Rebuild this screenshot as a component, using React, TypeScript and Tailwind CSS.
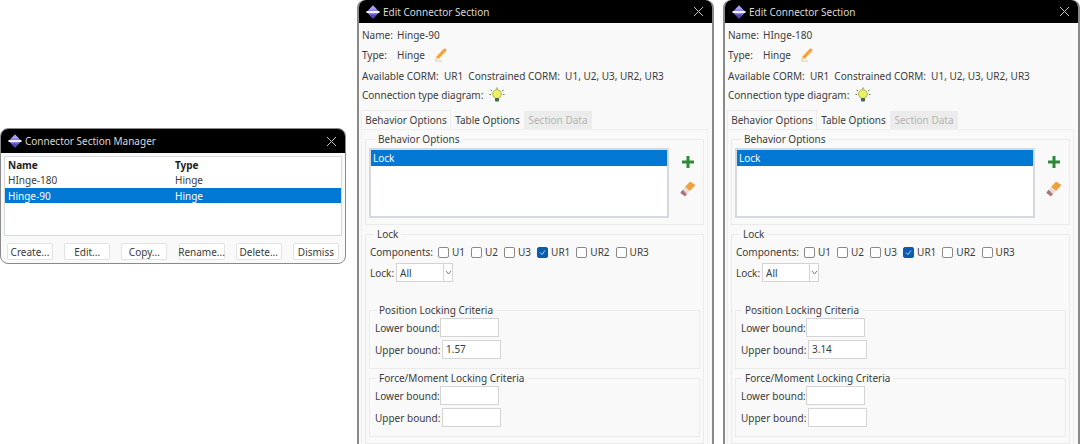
import React from "react";

const Logo = () => (
  <svg width="14" height="14" viewBox="0 0 14 14" className="shrink-0">
    <path d="M7 0.5 L13.5 7 L7 13.5 L0.5 7 Z" fill="#8d7fe0" />
    <path d="M7 0.5 L11 4.5 H3 Z" fill="#a99ff0" />
    <path d="M3 9.5 H11 L7 13.5 Z" fill="#4d47b8" />
    <rect x="0.5" y="6" width="13" height="2" fill="#f1f0ff" />
  </svg>
);

const CloseIcon = () => (
  <svg width="11" height="11" viewBox="0 0 11 11" className="shrink-0">
    <path d="M1 1 L10 10 M10 1 L1 10" stroke="#c4c4c4" strokeWidth="1" fill="none" />
  </svg>
);

const Pencil = () => (
  <svg width="13" height="14" viewBox="0 0 13 14">
    <path d="M9.5 1 L12 3.2 L4.5 11 L2 9 Z" fill="#f0a63c" />
    <path d="M9.5 1 L11 0.6 L12.5 2 L12 3.2 Z" fill="#e8855a" />
    <path d="M2 9 L4.5 11 L1 12.5 Z" fill="#f3d6a8" />
    <path d="M1 13 H8" stroke="#e9c9a0" strokeWidth="1" />
  </svg>
);

const Bulb = () => (
  <svg width="16" height="16" viewBox="0 0 16 16">
    <path d="M8 0.5 V2 M1.5 3 L3 4 M14.5 3 L13 4 M0.5 7.5 H2 M14 7.5 H15.5" stroke="#5f7f4a" strokeWidth="1" />
    <circle cx="8" cy="7" r="4.4" fill="#eef06a" stroke="#9aa83a" strokeWidth="0.8" />
    <rect x="6" y="11" width="4" height="3.5" rx="0.8" fill="#3f6b45" />
  </svg>
);

const Plus = () => (
  <svg width="14" height="14" viewBox="0 0 14 14">
    <path d="M5.5 1 H8.5 V5.5 H13 V8.5 H8.5 V13 H5.5 V8.5 H1 V5.5 H5.5 Z" fill="#2e8b35" />
  </svg>
);

const Eraser = () => (
  <svg width="18" height="18" viewBox="0 0 18 18">
    <path d="M11 1.5 L16.5 5 L11 11 L6 7 Z" fill="#eda23f" />
    <path d="M6 7 L11 11 L8 14 L3.5 10 Z" fill="#e9dcd0" />
    <path d="M3.5 10 L8 14 L6 16.5 L1.5 13 Z" fill="#c96a78" />
    <path d="M3.5 10 L6 12 L4 14.5 L1.5 13 Z" fill="#8a7f8a" />
  </svg>
);

const TitleBar = ({ title, tall }: { title: string; tall?: boolean }) => (
  <div className={`flex items-center bg-black text-[#d8d8d8] rounded-t-[7px] pl-[7px] pr-[8px] ${tall ? "h-[24px]" : "h-[23px]"}`}>
    <Logo />
    <span className="ml-[3px] text-[10px] leading-none">{title}</span>
    <span className="ml-auto flex">
      <CloseIcon />
    </span>
  </div>
);

const managerButtons = ["Create...", "Edit...", "Copy...", "Rename...", "Delete...", "Dismiss"];

const Manager = () => (
  <div className="w-[346px] h-[136px] mt-[128px] shrink-0 rounded-[8px] border border-[#8a8a8a] bg-[#f9f9f9]">
    <TitleBar title="Connector Section Manager" tall />
    <div className="mx-[3px] mt-[3px] h-[80px] border border-[#d5d9dd] bg-white">
      <div className="flex h-[15px] items-center font-bold text-[#222]">
        <span className="w-[167px] pl-[3px]">Name</span>
        <span className="pl-[3px]">Type</span>
      </div>
      <div className="flex h-[16px] items-center">
        <span className="w-[167px] pl-[3px]">HInge-180</span>
        <span className="pl-[3px]">Hinge</span>
      </div>
      <div className="flex h-[15px] items-center bg-[#0078d4] text-white">
        <span className="w-[167px] pl-[3px]">Hinge-90</span>
        <span className="pl-[3px]">Hinge</span>
      </div>
    </div>
    <div className="mx-[6px] mt-[7px] flex justify-between">
      {managerButtons.map((b) => (
        <div key={b} className="flex h-[17px] w-[46px] items-center justify-center rounded-[2px] border border-[#e2e2e2] bg-white whitespace-nowrap">
          {b}
        </div>
      ))}
    </div>
  </div>
);

const Check = ({ label, checked }: { label: string; checked?: boolean }) => (
  <div className="flex items-center gap-[3px]">
    <div className={`flex h-[11px] w-[11px] items-center justify-center rounded-[2px] border ${checked ? "border-[#0a5cb0] bg-[#0a5cb0]" : "border-[#8a8a8a] bg-white"}`}>
      {checked && (
        <svg width="7" height="7" viewBox="0 0 7 7">
          <path d="M1 3.5 L3 5.5 L6 1.5" stroke="#cfe3f7" fill="none" strokeWidth="0.9" />
        </svg>
      )}
    </div>
    <span>{label}</span>
  </div>
);

const Group = ({ title, className, legendClass, children }: { title: string; className: string; legendClass: string; children: React.ReactNode }) => (
  <fieldset className={`border border-[#ebebeb] ${className}`}>
    <legend className={`leading-[12px] px-[3px] ${legendClass}`}>{title}</legend>
    {children}
  </fieldset>
);

const Field = ({ className, value }: { className: string; value?: string }) => (
  <div className={`h-[19px] w-[59px] border border-[#d4d4d4] bg-white pl-[3px] leading-[17px] ${className}`}>{value}</div>
);

const Bounds = ({ upper }: { upper?: string }) => (
  <div className="pl-[5px]">
    <div className="flex items-center">
      <span className="w-[65px]">Lower bound:</span>
      <Field className="" />
    </div>
    <div className="mt-[3px] flex items-center">
      <span className="w-[67px]">Upper bound:</span>
      <Field className="" value={upper} />
    </div>
  </div>
);

const EditWindow = ({ name, upper, className }: { name: string; upper: string; className: string }) => (
  <div className={`w-[357px] h-[460px] shrink-0 rounded-t-[8px] border-x-2 border-[#8a8a8a] bg-[#f9f9f9] ${className}`}>
    <TitleBar title="Edit Connector Section" />
    <div className="pl-[3px]">
      <div className="flex h-[14px] mt-[5px] items-center">
        <span className="w-[35px]">Name:</span>
        <span>{name}</span>
      </div>
      <div className="flex h-[14px] mt-[6px] items-center">
        <span className="w-[35px]">Type:</span>
        <span>Hinge</span>
        <span className="ml-[9px] flex">
          <Pencil />
        </span>
      </div>
      <div className="flex h-[14px] mt-[7px] items-center">
        <span>Available CORM:&nbsp; UR1&nbsp; Constrained CORM:&nbsp; U1, U2, U3, UR2, UR3</span>
      </div>
      <div className="flex h-[14px] mt-[5px] items-center">
        <span>Connection type diagram:</span>
        <span className="ml-[6px] flex">
          <Bulb />
        </span>
      </div>
    </div>
    <div className="mt-[8px] ml-[2px] flex h-[19px] items-end">
      <div className="flex h-[19px] w-[90px] items-center justify-center border-x border-t border-[#ececec] bg-[#fafafa]">Behavior Options</div>
      <div className="flex h-[18px] w-[73px] items-center justify-center">Table Options</div>
      <div className="flex h-[18px] w-[68px] items-center justify-center bg-[#ececec] text-[#b4b4b4]">Section Data</div>
    </div>
    <div className="ml-[2px] mr-[4px] border border-[#efefef] px-[3px] pt-[3px]">
      <Group title="Behavior Options" className="h-[92px] pl-[3px]" legendClass="ml-[6px]">
        <div className="flex">
          <div className="mt-[3px] h-[70px] w-[300px] border-2 border-[#d5d9dd] bg-white">
            <div className="flex h-[16px] items-center bg-[#0078d4] pl-[2px] text-white">Lock</div>
          </div>
          <div className="ml-[9px] flex flex-col items-center">
            <div className="mt-[10px] flex">
              <Plus />
            </div>
            <div className="mt-[11px] ml-[1px] flex">
              <Eraser />
            </div>
          </div>
        </div>
      </Group>
      <Group title="Lock" className="mt-[3px] h-[216px] px-[3px]" legendClass="ml-[5px]">
        <div className="mt-[5px] ml-[1px] flex h-[14px] items-center">
          <span className="mr-[5px]">Components:</span>
          <div className="flex gap-[6px]">
            <Check label="U1" />
            <Check label="U2" />
            <Check label="U3" />
            <Check label="UR1" checked />
            <Check label="UR2" />
            <Check label="UR3" />
          </div>
        </div>
        <div className="mt-[4px] ml-[1px] flex items-center">
          <span className="w-[26px]">Lock:</span>
          <div className="flex h-[19px] w-[57px] items-center border border-[#d4d4d4] bg-white pl-[3px]">
            <span>All</span>
            <span className="ml-auto flex h-full w-[9px] items-center justify-center border-l border-[#d4d4d4]">
              <svg width="7" height="5" viewBox="0 0 7 5">
                <path d="M1 1 L3.5 4 L6 1" stroke="#777" fill="none" />
              </svg>
            </span>
          </div>
        </div>
        <Group title="Position Locking Criteria" className="mt-[22px] h-[65px] pl-0" legendClass="ml-[6px]">
          <div className="mt-[2px]">
            <Bounds upper={upper} />
          </div>
        </Group>
        <Group title="Force/Moment Locking Criteria" className="mt-[3px] h-[65px] pl-0" legendClass="ml-[6px]">
          <div className="mt-[2px]">
            <Bounds />
          </div>
        </Group>
      </Group>
    </div>
  </div>
);

export default function App() {
  return (
    <div className="flex h-[444px] w-[1080px] items-start overflow-hidden bg-white text-[10px] leading-[14px] text-[#3c3c3c] [font-family:'Noto_Sans','Open_Sans',sans-serif]">
      <Manager />
      <EditWindow name="Hinge-90" upper="1.57" className="ml-[11px]" />
      <EditWindow name="HInge-180" upper="3.14" className="ml-[9px]" />
    </div>
  );
}
